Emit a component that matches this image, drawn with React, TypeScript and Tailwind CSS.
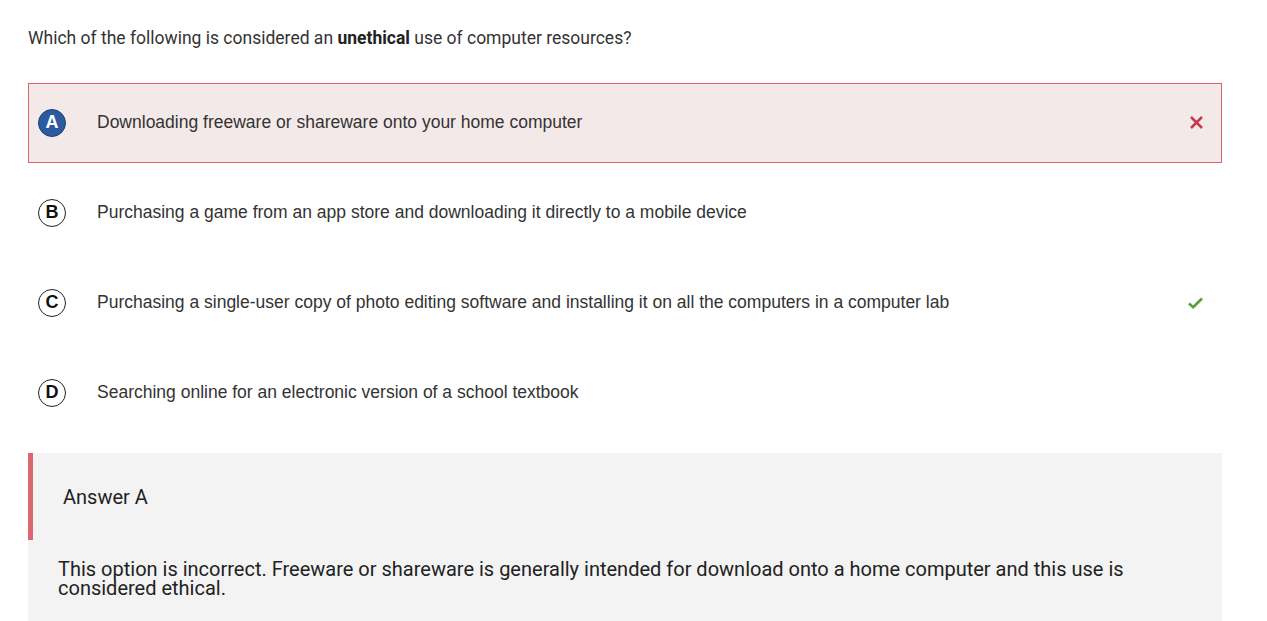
const options = [
  { key: "A", text: "Downloading freeware or shareware onto your home computer", state: "wrong" },
  { key: "B", text: "Purchasing a game from an app store and downloading it directly to a mobile device", state: "none" },
  { key: "C", text: "Purchasing a single-user copy of photo editing software and installing it on all the computers in a computer lab", state: "correct" },
  { key: "D", text: "Searching online for an electronic version of a school textbook", state: "none" },
];

function Badge({ letter, selected }: { letter: string; selected: boolean }) {
  if (selected) {
    return (
      <span className="flex h-[28px] w-[28px] items-center justify-center rounded-full border border-[#1d3f75] bg-[#2c5aa0] text-[18px] font-bold text-white">
        {letter}
      </span>
    );
  }
  return (
    <span className="flex h-[28px] w-[28px] items-center justify-center rounded-full border-[1.5px] border-[#222] bg-white text-[18px] font-bold text-[#111]">
      {letter}
    </span>
  );
}

function Cross() {
  return (
    <svg width="15" height="15" viewBox="0 0 15 15">
      <path d="M2 2 L13 13 M13 2 L2 13" stroke="#c23b4b" strokeWidth="2.5" />
    </svg>
  );
}

function Check() {
  return (
    <svg width="17" height="14" viewBox="0 0 17 14">
      <path d="M2 7.5 L6.2 11.2 L15 2.5" fill="none" stroke="#5a9e3e" strokeWidth="2.7" />
    </svg>
  );
}

export default function App() {
  return (
    <div className="min-h-screen bg-white px-[28px] pt-[26px] text-[#333]" style={{ width: 1267 }}>
      <div className="w-[1194px]">
        <p className="font-['Roboto',sans-serif] text-[17.5px] leading-[24px] text-[#333]">
          Which of the following is considered an <b className="font-bold text-[#222]">unethical</b> use of computer resources?
        </p>

        <div className="mt-[33px] flex flex-col gap-[10px] font-['Liberation_Sans',Arial,sans-serif]">
          {options.map((o) => (
            <div
              key={o.key}
              className={
                o.state === "wrong"
                  ? "flex h-[80px] items-center border border-[#dc6470] bg-[#f4e9e9] pl-[9px] pr-[17px] pb-[1px]"
                  : "flex h-[80px] items-center border border-transparent pl-[9px] pr-[17px] pb-[1px]"
              }
            >
              <Badge letter={o.key} selected={o.state === "wrong"} />
              <span className="ml-[31px] flex-1 text-[17.5px] text-[#333]">{o.text}</span>
              {o.state === "wrong" && <Cross />}
              {o.state === "correct" && <Check />}
            </div>
          ))}
        </div>

        <div className="mt-[20px] bg-[#f3f3f3] pb-[24px] font-['Roboto',sans-serif]">
          <div className="flex h-[87px] items-center border-l-[5px] border-[#db6670] pl-[30px]">
            <span className="text-[20px] text-[#222]">Answer A</span>
          </div>
          <p className="mt-[20px] pl-[30px] pr-[30px] text-[20px] leading-[19px] text-[#222]">
            This option is incorrect. Freeware or shareware is generally intended for download onto a home computer and this use is considered ethical.
          </p>
        </div>
      </div>
    </div>
  );
}
